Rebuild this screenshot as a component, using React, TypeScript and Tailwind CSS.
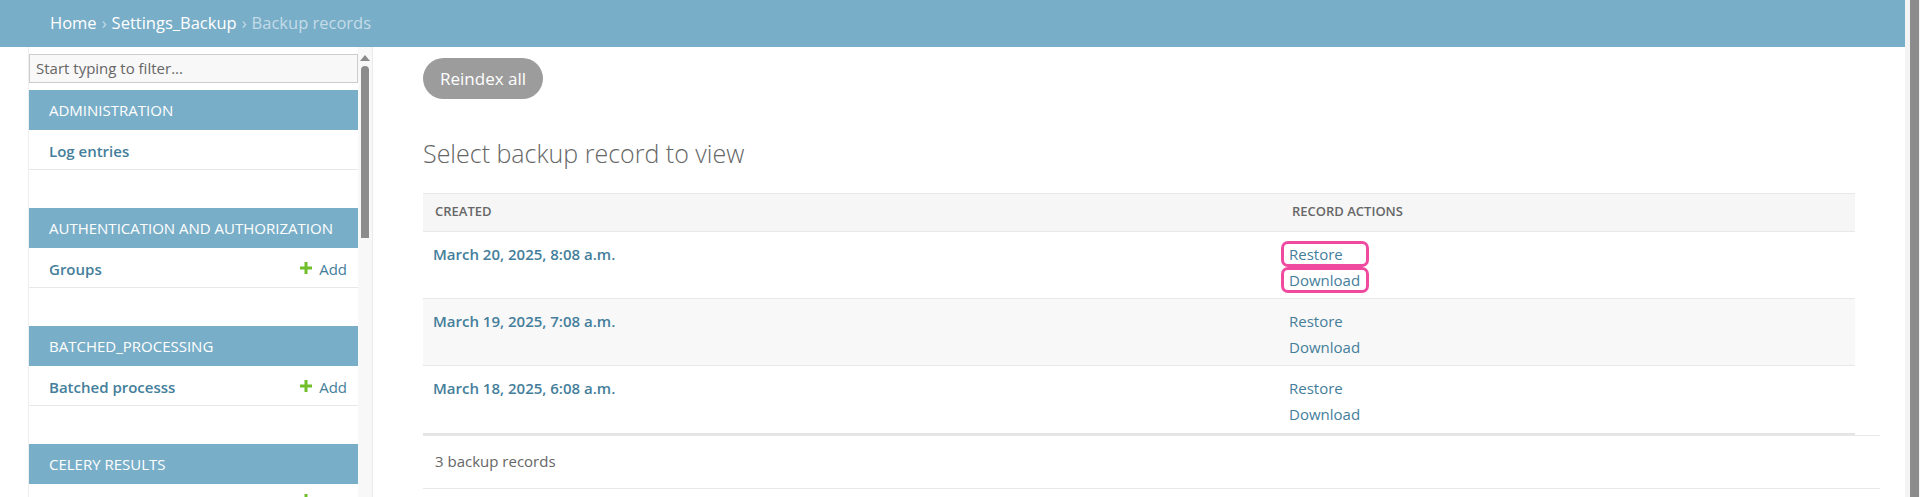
import { Fragment } from 'react';

const sections = [
  { title: 'Administration', items: [{ name: 'Log entries', add: false }] },
  { title: 'Authentication and Authorization', items: [{ name: 'Groups', add: true }] },
  { title: 'Batched_processing', items: [{ name: 'Batched processs', add: true }] },
];

const records = [
  { created: 'March 20, 2025, 8:08 a.m.', marked: true },
  { created: 'March 19, 2025, 7:08 a.m.', marked: false },
  { created: 'March 18, 2025, 6:08 a.m.', marked: false },
];

function PlusIcon() {
  return (
    <svg width="12" height="12" viewBox="0 0 12 12" className="mb-[3px]">
      <path d="M4.5 0h3v4.5H12v3H7.5V12h-3V7.5H0v-3h4.5z" fill="#70bf2b" />
    </svg>
  );
}

function ActionLink({ label, marked }: { label: string; marked: boolean }) {
  return (
    <div className="relative h-[26px] leading-[26px] w-fit">
      <a className="text-[#447e9b]">{label}</a>
      {marked && (
        <span className="absolute left-[-8px] top-0 w-[88px] h-[26px] rounded-[7px] border-[3px] border-[#ef4a9f]" />
      )}
    </div>
  );
}

export default function App() {
  return (
    <div className="w-[1920px] h-[497px] overflow-hidden flex bg-white font-['Open_Sans','Noto_Sans',sans-serif]">
      <div className="flex-1 flex flex-col min-w-0">
        {/* breadcrumbs */}
        <div className="h-[47px] shrink-0 bg-[#79aec8] flex items-center pl-[50px] text-[16.5px] text-[#c4dce8]">
          <a className="text-white">Home</a>
          <span className="mx-[5px]">›</span>
          <a className="text-white">Settings_Backup</a>
          <span className="mx-[5px]">›</span>
          <span>Backup records</span>
        </div>

        <div className="flex flex-1 min-h-0">
          {/* nav toggle strip */}
          <div className="w-[29px] shrink-0 border-r border-[#eeeeee]" />

          {/* sidebar */}
          <div className="w-[344px] shrink-0 flex border-r border-[#eaeaea]">
            <div className="w-[329px] shrink-0 pt-[7px]">
              <div className="h-[29px] border border-[#cccccc] bg-[#f8f8f8] flex items-center px-[6px] text-[15px] text-[#666]">
                Start typing to filter...
              </div>
              <div className="mt-[7px]">
                {sections.map((s) => (
                  <div key={s.title} className="mb-[38px]">
                    <div className="h-[40px] bg-[#79aec8] text-white uppercase text-[15px] flex items-center pl-[20px]">
                      {s.title}
                    </div>
                    {s.items.map((it) => (
                      <div
                        key={it.name}
                        className="h-[40px] border-b border-[#e8e8e8] flex items-center justify-between pl-[20px] pr-[11px] pt-[3px] text-[15px]"
                      >
                        <a className="font-semibold text-[#447e9b]">{it.name}</a>
                        {it.add && (
                          <a className="flex items-center gap-[7px] text-[#447e9b]">
                            <PlusIcon />
                            Add
                          </a>
                        )}
                      </div>
                    ))}
                  </div>
                ))}
                <div className="h-[40px] bg-[#79aec8] text-white uppercase text-[15px] flex items-center pl-[20px]">
                  Celery Results
                </div>
                <div className="flex justify-end pr-[46px] pt-[10px]">
                  <PlusIcon />
                </div>
              </div>
            </div>
            {/* sidebar scrollbar */}
            <div className="w-[15px] bg-[#f8f8f8] flex flex-col items-center pt-[8px]">
              <div className="w-0 h-0 border-l-[5px] border-r-[5px] border-b-[6px] border-l-transparent border-r-transparent border-b-[#8a8a8a]" />
              <div className="mt-[5px] w-[8px] h-[172px] rounded-t-full rounded-b-[3px] bg-[#8c8c8c]" />
            </div>
          </div>

          {/* content */}
          <div className="flex-1 min-w-0 pl-[50px] pr-[25px] pt-[11px]">
            <button className="h-[41px] w-[120px] rounded-full bg-[#9c9c9c] text-white text-[17px]">
              Reindex all
            </button>
            <h1 className="mt-[36px] text-[25px] font-light text-[#666]">Select backup record to view</h1>

            <div className="mt-[20px] mr-[25px] grid grid-cols-[859px_1fr] text-[15px] border-b-2 border-[#e4e4e4]">
              <div className="h-[39px] bg-[#f6f6f6] border-t border-b border-[#e8e8e8] flex items-center pl-[12px] text-[13px] font-semibold text-[#666] uppercase">
                Created
              </div>
              <div className="h-[39px] bg-[#f6f6f6] border-t border-b border-[#e8e8e8] flex items-center pl-[10px] text-[13px] font-semibold text-[#666] uppercase">
                Record actions
              </div>
              {records.map((r, i) => (
                <Fragment key={r.created}>
                  <div
                    className={`h-[67px] pl-[10px] pt-[9px] leading-[26px] ${i % 2 === 1 ? 'bg-[#f8f8f8]' : ''} ${i < 2 ? 'border-b border-[#e8e8e8]' : ''}`}
                  >
                    <a className="font-semibold text-[#447e9b]">{r.created}</a>
                  </div>
                  <div
                    className={`h-[67px] pl-[7px] pt-[9px] ${i % 2 === 1 ? 'bg-[#f8f8f8]' : ''} ${i < 2 ? 'border-b border-[#e8e8e8]' : ''}`}
                  >
                    <ActionLink label="Restore" marked={r.marked} />
                    <ActionLink label="Download" marked={r.marked} />
                  </div>
                </Fragment>
              ))}
            </div>
            <div className="h-[54px] border-t border-b border-[#e8e8e8] flex items-center pl-[12px] text-[15px] text-[#666]">
              3 backup records
            </div>
          </div>
        </div>
      </div>

      {/* page scrollbar */}
      <div className="w-[15px] shrink-0 bg-[#f4f4f4] flex justify-center pl-[3px]">
        <div className="w-[9px] h-full bg-[#8c8c8c]" />
      </div>
    </div>
  );
}
